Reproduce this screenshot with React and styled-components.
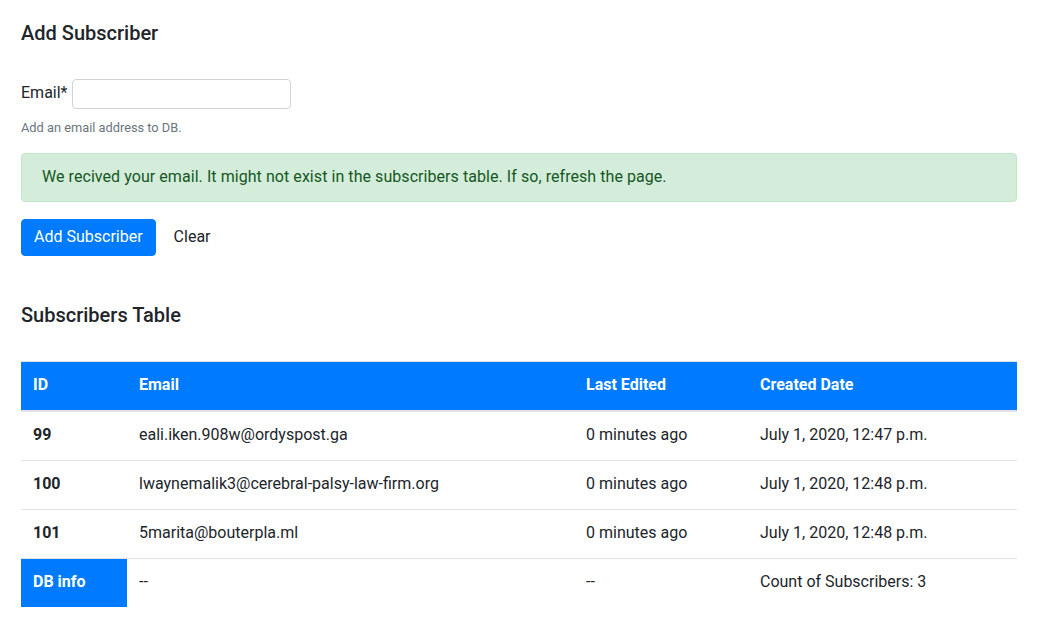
import styled, { createGlobalStyle } from "styled-components";

const GlobalStyle = createGlobalStyle`
  body {
    margin: 0;
    font-family: Roboto, "Liberation Sans", Arial, sans-serif;
    font-size: 16px;
    line-height: 1.5;
    color: #212529;
    background: #fff;
  }
  * { box-sizing: border-box; }
`

const Page = styled.div`
  padding: 21px 25px 0 21px;
  width: 1042px;
`

const Heading = styled.h5`
  margin: 0 0 ${p => p.$gap}px 0;
  font-size: 20px;
  font-weight: 500;
  line-height: 24px;
`

const FormRow = styled.div`
  display: flex;
  align-items: center;
  height: 30px;
`

const Label = styled.label`
  margin-right: 4px;
  margin-top: -2px;
`

const EmailInput = styled.input`
  width: 219px;
  height: 30px;
  border: 1px solid #ced4da;
  border-radius: 4px;
  padding: 2px 8px;
  font: inherit;
  outline: none;
`

const HelpText = styled.small`
  display: block;
  margin-top: 9px;
  font-size: 12.8px;
  line-height: 19px;
  color: #6c757d;
`

const Alert = styled.div`
  margin-top: 16px;
  padding: 11px 20px;
  background: #d4edda;
  border: 1px solid #c3e6cb;
  border-radius: 4px;
  color: #155724;
  height: 49px;
  letter-spacing: 0.06px;
`

const Actions = styled.div`
  display: flex;
  gap: 5px;
  margin-top: 17px;
`

const Button = styled.button`
  font: inherit;
  height: 37px;
  padding: 5px 12px 7px;
  border: 1px solid ${p => (p.$primary ? "#007bff" : "transparent")};
  border-radius: 4px;
  background: ${p => (p.$primary ? "#007bff" : "transparent")};
  color: ${p => (p.$primary ? "#fff" : "#212529")};
  cursor: pointer;
`

const Spacer = styled.div`
  height: 47px;
`

const Table = styled.table`
  width: 996px;
  border-collapse: collapse;
`

const HeadCell = styled.th`
  background: #007bff;
  color: #fff;
  text-align: left;
  font-weight: 700;
  padding: 11px 12px 13px;
  line-height: 24px;
  border-top: 1px solid #dee2e6;
  border-bottom: 2px solid #dee2e6;
  width: ${p => p.$w}px;
`

const Cell = styled.td`
  padding: 11px 12px 13px;
  line-height: 24px;
  border-top: 1px solid #dee2e6;
  font-weight: ${p => (p.$bold ? 700 : 400)};
  background: ${p => (p.$info ? "#007bff" : "transparent")};
  color: ${p => (p.$info ? "#fff" : "#212529")};
`

const subscribers = [
  { id: 99, email: "eali.iken.908w@ordyspost.ga", edited: "0 minutes ago", created: "July 1, 2020, 12:47 p.m." },
  { id: 100, email: "lwaynemalik3@cerebral-palsy-law-firm.org", edited: "0 minutes ago", created: "July 1, 2020, 12:48 p.m." },
  { id: 101, email: "5marita@bouterpla.ml", edited: "0 minutes ago", created: "July 1, 2020, 12:48 p.m." },
];

export default function App() {
  return (
    <Page>
      <GlobalStyle />
      <Heading $gap={34}>Add Subscriber</Heading>
      <FormRow>
        <Label>Email*</Label>
        <EmailInput type="text" />
      </FormRow>
      <HelpText>Add an email address to DB.</HelpText>
      <Alert>We recived your email. It might not exist in the subscribers table. If so, refresh the page.</Alert>
      <Actions>
        <Button $primary>Add Subscriber</Button>
        <Button>Clear</Button>
      </Actions>
      <Spacer />
      <Heading $gap={34}>Subscribers Table</Heading>
      <Table>
        <thead>
          <tr>
            <HeadCell $w={106}>ID</HeadCell>
            <HeadCell $w={447}>Email</HeadCell>
            <HeadCell $w={174}>Last Edited</HeadCell>
            <HeadCell>Created Date</HeadCell>
          </tr>
        </thead>
        <tbody>
          {subscribers.map(s => (
            <tr key={s.id}>
              <Cell $bold>{s.id}</Cell>
              <Cell>{s.email}</Cell>
              <Cell>{s.edited}</Cell>
              <Cell>{s.created}</Cell>
            </tr>
          ))}
          <tr>
            <Cell $bold $info>DB info</Cell>
            <Cell>--</Cell>
            <Cell>--</Cell>
            <Cell>Count of Subscribers: {subscribers.length}</Cell>
          </tr>
        </tbody>
      </Table>
    </Page>
  );
}
